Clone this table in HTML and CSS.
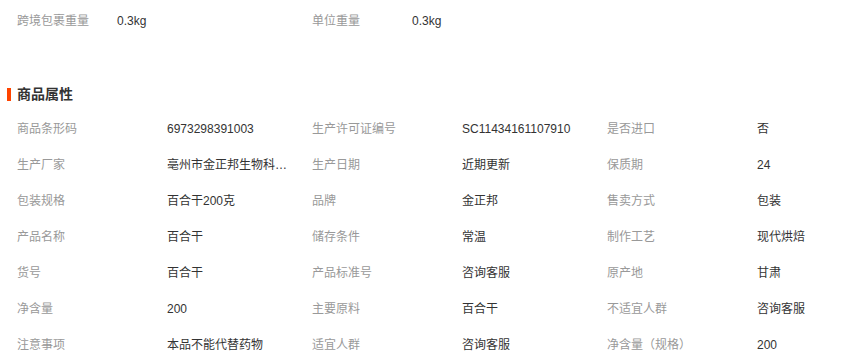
FILE: index.html
```html
<!DOCTYPE html>
<html lang="zh-CN">
<head>
<meta charset="utf-8">
<link rel="stylesheet" href="styles.css">
</head>
<body>
<div class="page">
  <div class="weights">
    <div class="wcell"><span class="wlabel">跨境包裹重量</span><span class="wvalue">0.3kg</span></div>
    <div class="wcell"><span class="wlabel">单位重量</span><span class="wvalue">0.3kg</span></div>
  </div>
  <h2 class="title">商品属性</h2>
  <div class="attrs">
    <div class="cell"><span class="label">商品条形码</span><span class="value">6973298391003</span></div>
    <div class="cell"><span class="label">生产许可证编号</span><span class="value">SC11434161107910</span></div>
    <div class="cell"><span class="label">是否进口</span><span class="value">否</span></div>
    <div class="cell"><span class="label">生产厂家</span><span class="value">亳州市金正邦生物科…</span></div>
    <div class="cell"><span class="label">生产日期</span><span class="value">近期更新</span></div>
    <div class="cell"><span class="label">保质期</span><span class="value">24</span></div>
    <div class="cell"><span class="label">包装规格</span><span class="value">百合干200克</span></div>
    <div class="cell"><span class="label">品牌</span><span class="value">金正邦</span></div>
    <div class="cell"><span class="label">售卖方式</span><span class="value">包装</span></div>
    <div class="cell"><span class="label">产品名称</span><span class="value">百合干</span></div>
    <div class="cell"><span class="label">储存条件</span><span class="value">常温</span></div>
    <div class="cell"><span class="label">制作工艺</span><span class="value">现代烘焙</span></div>
    <div class="cell"><span class="label">货号</span><span class="value">百合干</span></div>
    <div class="cell"><span class="label">产品标准号</span><span class="value">咨询客服</span></div>
    <div class="cell"><span class="label">原产地</span><span class="value">甘肃</span></div>
    <div class="cell"><span class="label">净含量</span><span class="value">200</span></div>
    <div class="cell"><span class="label">主要原料</span><span class="value">百合干</span></div>
    <div class="cell"><span class="label">不适宜人群</span><span class="value">咨询客服</span></div>
    <div class="cell"><span class="label">注意事项</span><span class="value">本品不能代替药物</span></div>
    <div class="cell"><span class="label">适宜人群</span><span class="value">咨询客服</span></div>
    <div class="cell"><span class="label">净含量（规格）</span><span class="value">200</span></div>
  </div>
</div>
</body>
</html>
```
FILE: styles.css
```css
html, body {
  margin: 0;
  padding: 0;
  background: #fff;
}
body {
  font-family: "Liberation Sans", "Noto Sans CJK SC", sans-serif;
  font-size: 12px;
  color: #333;
  overflow: hidden;
  width: 868px;
  height: 360px;
}
.page {
  padding: 3px 0 0 7px;
}
.weights {
  display: grid;
  grid-template-columns: repeat(2, 295px);
  padding-left: 10px;
}
.wcell {
  display: flex;
  line-height: 36px;
  height: 36px;
}
.wlabel {
  width: 100px;
  color: #999;
  flex: none;
}
.wvalue {
  color: #333;
}
.title {
  margin: 45px 0 0 0;
  font-size: 14px;
  font-weight: bold;
  line-height: 20px;
  height: 20px;
  color: #333;
  display: flex;
  align-items: center;
  gap: 6px;
}
.title::before {
  content: "";
  width: 4px;
  height: 13px;
  background: #ff4400;
  display: block;
}
.attrs {
  margin-top: 7px;
  padding-left: 10px;
  display: grid;
  grid-template-columns: repeat(3, 295px);
}
.cell {
  display: flex;
  height: 36px;
  line-height: 36px;
  white-space: nowrap;
}
.label {
  width: 150px;
  flex: none;
  color: #999;
}
.value {
  color: #333;
}
```
